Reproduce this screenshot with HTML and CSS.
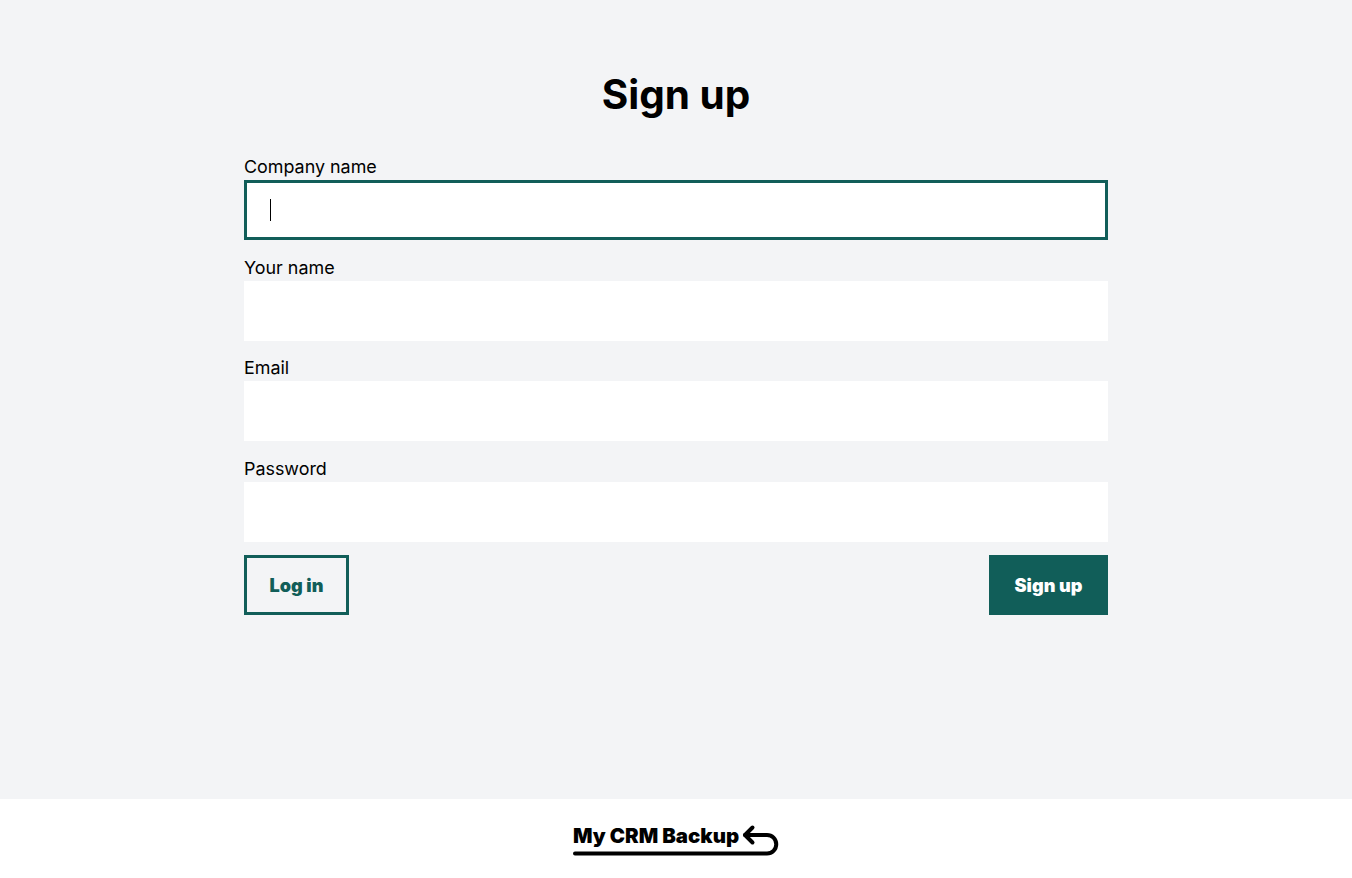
FILE: index.html
```html
<!DOCTYPE html>
<html lang="en">

<head>
    <meta charset="UTF-8">
    <title>Sign up</title>
    <link rel="stylesheet" href="styles.css">
</head>

<body>
    <main class="content">
        <h1 class="title">Sign up</h1>
        <form class="form">
            <label class="field">
                <span class="field-label">Company name</span>
                <span class="input input-focus"><span class="caret"></span></span>
            </label>
            <label class="field">
                <span class="field-label">Your name</span>
                <span class="input"></span>
            </label>
            <label class="field">
                <span class="field-label">Email</span>
                <span class="input"></span>
            </label>
            <label class="field">
                <span class="field-label">Password</span>
                <span class="input"></span>
            </label>
            <div class="actions">
                <a class="btn btn-outline">Log in</a>
                <a class="btn btn-solid">Sign up</a>
            </div>
        </form>
    </main>
    <footer class="footer">
        <div class="logo">
            <span class="logo-text">My CRM Backup</span>
            <svg class="logo-mark" width="206" height="38" viewBox="0 0 206 38" fill="none" stroke="#000" stroke-width="4" stroke-linecap="round" stroke-linejoin="round">
                <path d="M2 33.5H194a9.25 9.25 0 0 0 0-18.5H172"/>
                <path d="M179.5 7.5L172 15L179.5 22.5"/>
            </svg>
        </div>
    </footer>
</body>

</html>
```

FILE: styles.css
```css
body {
    margin: 0;
    height: 878px;
    display: flex;
    flex-direction: column;
    background-color: #f3f4f6;
    font-family: Inter, "Liberation Sans", sans-serif;
    color: #000;
}

.content {
    flex: 1;
    width: 864px;
    margin: 0 auto;
}

.title {
    margin: 0;
    padding-top: 71px;
    height: 85.4px;
    font-size: 40.5px;
    line-height: 48px;
    font-weight: 700;
    text-align: center;
}

.form {
    display: flex;
    flex-direction: column;
}

.field {
    display: block;
    margin-bottom: 16.5px;
}

.field-label {
    display: block;
    height: 24px;
    font-size: 17.9px;
    line-height: 22px;
}

.input {
    display: flex;
    align-items: center;
    box-sizing: border-box;
    height: 60px;
    padding: 0 25px;
    background-color: #fff;
}

.input-focus {
    border: 3px solid #115e59;
    padding: 0 23px;
}

.caret {
    width: 1px;
    height: 22px;
    background-color: #000;
}

.actions {
    display: flex;
    justify-content: space-between;
    margin-top: -3.4px;
}

.btn {
    box-sizing: border-box;
    width: 119px;
    height: 60px;
    display: flex;
    align-items: center;
    justify-content: center;
    font-size: 18.1px;
    font-weight: 900;
}

.btn-outline {
    width: 105px;
    border: 3px solid #115e59;
    color: #115e59;
}

.btn-solid {
    background-color: #115e59;
    color: #fff;
}

.footer {
    height: 79px;
    background-color: #fff;
    display: flex;
    justify-content: center;
}

.logo {
    position: relative;
    width: 206px;
    height: 60px;
}

.logo-text {
    position: absolute;
    left: 0;
    top: 24px;
    font-size: 20.4px;
    line-height: 25px;
    font-weight: 900;
    white-space: nowrap;
}

.logo-mark {
    position: absolute;
    left: 0;
    top: 21px;
}
```
